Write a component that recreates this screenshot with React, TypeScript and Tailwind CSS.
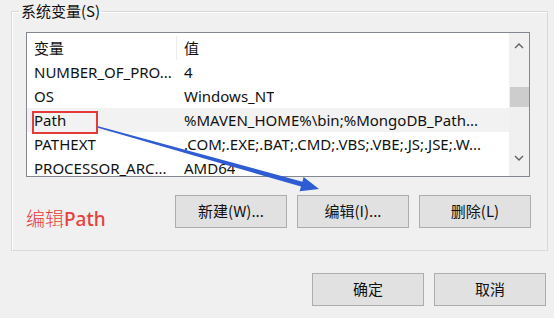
const rows = [
  { name: "NUMBER_OF_PRO...", value: "4" },
  { name: "OS", value: "Windows_NT" },
  { name: "Path", value: "%MAVEN_HOME%\\bin;%MongoDB_Path...", selected: true },
  { name: "PATHEXT", value: ".COM;.EXE;.BAT;.CMD;.VBS;.VBE;.JS;.JSE;.W..." },
  { name: "PROCESSOR_ARC...", value: "AMD64" },
];

const WinButton = ({ label }: { label: string }) => (
  <button className="w-[112px] h-[33px] bg-[#e1e1e1] border border-[#adadad] text-[15px] text-[#111] flex items-center justify-center">
    {label}
  </button>
);

const App = () => {
  return (
    <div className="relative w-[554px] h-[318px] overflow-hidden bg-[#f0f0f0] font-['Noto_Sans','Noto_Sans_CJK_SC',sans-serif] text-[15px] text-[#111]">
      <div className="pl-[11px]">
        <fieldset className="w-[537px] border border-[#d9d9d9] shadow-[inset_1px_1px_0_#ffffff] pl-[14px] pr-[16px] pt-[10px] pb-[19px] m-0">
          <legend className="-ml-[7px] px-[2px] leading-[22px] font-['Noto_Sans_CJK_SC',sans-serif]">系统变量(S)</legend>

          <div className="flex w-[504px] h-[145px] border border-[#828790] bg-white overflow-hidden">
            <div className="flex-1 flex flex-col">
              <div className="flex h-[27px] pt-[3px] shrink-0 font-['Noto_Sans_CJK_SC',sans-serif]">
                <div className="w-[150px] pl-[7px] border-r border-[#ececec] leading-[24px]">变量</div>
                <div className="pl-[7px] leading-[24px]">值</div>
              </div>
              {rows.map((r) => (
                <div
                  key={r.name}
                  className={`flex h-[24px] shrink-0 items-center whitespace-nowrap ${r.selected ? "bg-[#f2f2f2]" : ""}`}
                >
                  <div className="relative w-[150px] h-full flex items-center pl-[7px]">
                    {r.name}
                    {r.selected && (
                      <div className="absolute left-[5px] top-[3px] w-[66px] h-[23px] border-2 border-[#e53a3a]" />
                    )}
                  </div>
                  <div className="pl-[7px] overflow-hidden">{r.value}</div>
                </div>
              ))}
            </div>
            <div className="w-[20px] bg-[#f0f0f0] flex flex-col items-center shrink-0">
              <svg width="10" height="7" viewBox="0 0 10 7" className="mt-[9px]">
                <path d="M1 6 L5 2 L9 6" fill="none" stroke="#606060" strokeWidth="1.4" />
              </svg>
              <div className="w-[19px] h-[20px] bg-[#cdcdcd] mt-[38px]" />
              <svg width="10" height="7" viewBox="0 0 10 7" className="mt-[48px]">
                <path d="M1 1 L5 5 L9 1" fill="none" stroke="#606060" strokeWidth="1.4" />
              </svg>
            </div>
          </div>

          <div className="flex items-start mt-[18px]">
            <div className="pt-[11px] text-[19px] leading-[24px] text-[#e8403a] font-['Noto_Sans_CJK_SC',sans-serif]">
              <span className="font-light">编辑</span>
              <span className="font-['Noto_Sans',sans-serif] font-medium">Path</span>
            </div>
            <div className="ml-auto flex gap-[10px] font-['Noto_Sans_CJK_SC',sans-serif]">
              <WinButton label="新建(W)..." />
              <WinButton label="编辑(I)..." />
              <WinButton label="删除(L)" />
            </div>
          </div>
        </fieldset>
      </div>

      <div className="flex justify-end gap-[10px] pr-[8px] mt-[22px] font-['Noto_Sans_CJK_SC',sans-serif]">
        <WinButton label="确定" />
        <WinButton label="取消" />
      </div>

      <svg className="absolute left-0 top-0 pointer-events-none" width="554" height="318">
        <polygon
          points="98.2,126.3 302.4,181.7 303.6,177.0 319,189 299.6,191.2 301.0,186.5 97.8,127.7"
          fill="#2f5bd3"
        />
      </svg>
    </div>
  );
};

export default App;
